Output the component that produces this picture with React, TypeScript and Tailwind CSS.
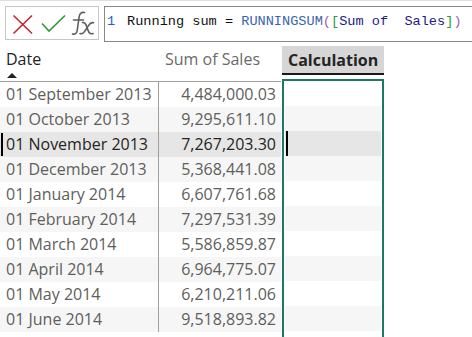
import React from "react";

const rows = [
  ["01 September 2013", "4,484,000.03"],
  ["01 October 2013", "9,295,611.10"],
  ["01 November 2013", "7,267,203.30"],
  ["01 December 2013", "5,368,441.08"],
  ["01 January 2014", "6,607,761.68"],
  ["01 February 2014", "7,297,531.39"],
  ["01 March 2014", "5,586,859.87"],
  ["01 April 2014", "6,964,775.07"],
  ["01 May 2014", "6,210,211.06"],
  ["01 June 2014", "9,518,893.82"],
];

const SELECTED = 2;

function rowBg(i: number) {
  if (i === SELECTED) return "bg-[#e6e6e6]";
  return i % 2 === 1 ? "bg-[#f6f6f6]" : "bg-white";
}

function FormulaIcons() {
  return (
    <svg width="92" height="32" viewBox="0 0 92 32" fill="none">
      {/* cancel */}
      <path d="M7.5 8.5 L26 26.5 M26 8.5 L7.5 26.5" stroke="#c4262e" strokeWidth="1.6" />
      {/* commit */}
      <path d="M36 16.5 L43 24 L59 8.5" stroke="#2e9a34" strokeWidth="1.6" />
      {/* fx */}
      <g stroke="#5f5e5d" strokeWidth="1.6" strokeLinecap="round">
        <path d="M78.5 5.5 C75.5 4.8 73.6 6.5 73.1 10 L71.2 23.5 C70.8 26.3 69 27.6 66.5 27" />
        <path d="M67.5 13 L77.5 13" />
        <path d="M76.5 15.5 C78.5 15.2 79.6 16.4 80.5 19 L82.3 24 C83.2 26.4 84.6 27.2 87 26.6" />
        <path d="M87.5 15.8 C85.5 15.2 84 16.2 82.5 18.6 L78.8 24.2 C77.4 26.5 75.8 27.2 74 26.6" />
      </g>
    </svg>
  );
}

export default function App() {
  return (
    <div className="w-[472px] h-[337px] overflow-hidden bg-white font-['Open_Sans',sans-serif]">
      <div className="h-px bg-[#e1dfdd]" />
      {/* formula bar */}
      <div className="flex items-start gap-[5px] pl-[5px] pt-[5px]">
        <div className="w-[94px] h-[34px] shrink-0 border border-[#c8c6c4] flex items-center">
          <FormulaIcons />
        </div>
        <div className="w-[372px] shrink-0 h-[36px] border border-[#8a8886] pl-[2px] pt-[5px] font-['Liberation_Mono',monospace] text-[13.6px] leading-[20px] whitespace-pre">
          <span className="inline-block w-[20px] text-[#1e63c4]">1</span>
          <span className="text-[#111]">Running sum = </span>
          <span className="text-[#3b63b0]">RUNNINGSUM</span>
          <span className="text-[#a35bb0]">(</span>
          <span className="text-[#2f9a3c]">[</span>
          <span className="text-[#1c1a8a]">Sum of  Sales</span>
          <span className="text-[#2f9a3c]">]</span>
          <span className="text-[#a35bb0]">)</span>
        </div>
      </div>

      {/* table */}
      <div className="flex mt-[4px]">
        <div className="w-[281px] shrink-0">
          <div className="h-[36px] flex border-b border-[#a19f9d]">
            <div className="w-[159px] pl-[6px] pt-[2px] text-[16px] text-[#252423] leading-[22px]">
              <div>Date</div>
              <div className="w-0 h-0 ml-[1px] mt-[3px] border-l-[5px] border-r-[5px] border-b-[5px] border-l-transparent border-r-transparent border-b-[#252423]" />
            </div>
            <div className="flex-1 text-right pr-[21px] pt-[2px] text-[16px] text-[#6b6a69] leading-[22px]">
              Sum of Sales
            </div>
          </div>
          {rows.map(([d, v], i) => (
            <div key={d} className={`h-[25px] flex text-[16px] leading-[25px] ${rowBg(i)} ${i === SELECTED ? "text-[#252423]" : "text-[#605e5c]"}`}>
              <div className="w-[159px] relative border-r border-[#a19f9d] pl-[6px] whitespace-nowrap">
                {i === SELECTED && <div className="absolute left-[1px] top-[1px] bottom-[1px] w-[2px] bg-black" />}
                {d}
              </div>
              <div className="flex-1 text-right pr-[5px]">{v}</div>
            </div>
          ))}
        </div>
        <div className="ml-[1px] w-[102px] shrink-0">
          <div className="h-[29px] bg-[#d6d6d6] border-b-2 border-[#1b1a19] pl-[6px] text-[16px] font-bold leading-[29px] text-[#252423]">
            Calculation
          </div>
          <div className="mt-[4px] border-2 border-[#1a7a66] px-px h-[300px]">
            {rows.map(([d], i) => (
              <div key={d} className={`h-[25px] relative ${rowBg(i)}`}>
                {i === SELECTED && <div className="absolute left-[1px] top-0 bottom-0 w-[2px] bg-black" />}
              </div>
            ))}
          </div>
        </div>
      </div>
    </div>
  );
}
